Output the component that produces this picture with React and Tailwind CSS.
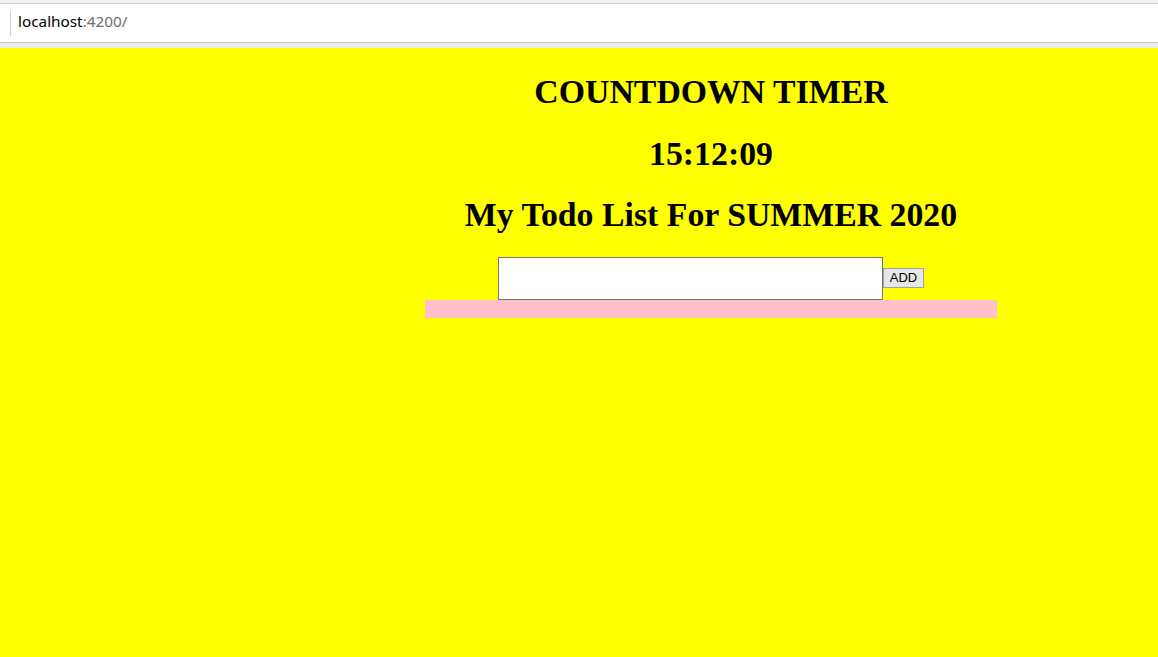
import React, { useState } from 'react';

const App = () => {
  const [todo, setTodo] = useState("");

  return (
    <div className="w-full min-h-screen flex flex-col bg-[#ffff00] text-black overflow-hidden">
      {/* browser address bar */}
      <div className="h-[48px] bg-[#f2f2f2] flex flex-col shrink-0">
        <div className="h-[3px] bg-[#f2f2f2]"></div>
        <div className="h-[1px] bg-[#d4d4d4]"></div>
        <div className="h-[38px] bg-white flex items-center">
          <span className="ml-[10px] w-[1px] h-[25px] bg-[#d0d0d0]"></span>
          <span className="ml-[7px] text-[15.3px] font-['Noto_Sans',sans-serif] leading-none pb-[2px]">
            localhost<span className="text-[#6e6e6e]">:4200/</span>
          </span>
        </div>
        <div className="h-[1px] bg-[#c8c8c8]"></div>
        <div className="flex-1 bg-[#ececec]"></div>
      </div>

      {/* page */}
      <div className="flex-1 bg-[#ffff00] flex">
        <div className="ml-[425px] w-[572px] flex flex-col items-center pt-[25px] font-['Liberation_Serif',serif]">
          <h1 className="text-[33.8px] leading-[38px] font-bold mb-[23.5px]">COUNTDOWN TIMER</h1>
          <h1 className="text-[33.8px] leading-[38px] font-bold mb-[23.5px]">15:12:09</h1>
          <h1 className="text-[33.8px] leading-[38px] font-bold mb-[22.5px]">My Todo List For SUMMER 2020</h1>
          <div className="flex items-start">
            <input
              type="text"
              value={todo}
              onChange={(e) => setTodo(e.target.value)}
              className="w-[385px] h-[43px] bg-white border border-[#767676] outline-none px-1"
            />
            <button className="mt-[11px] w-[41px] h-[20px] bg-[#e6e6e6] border border-[#a0a0a0] text-[13px] leading-none font-['Liberation_Sans',sans-serif] text-black">
              ADD
            </button>
          </div>
          <div className="w-full h-[18px] bg-[#ffc0cb]"></div>
        </div>
      </div>
    </div>
  );
};

export default App;
